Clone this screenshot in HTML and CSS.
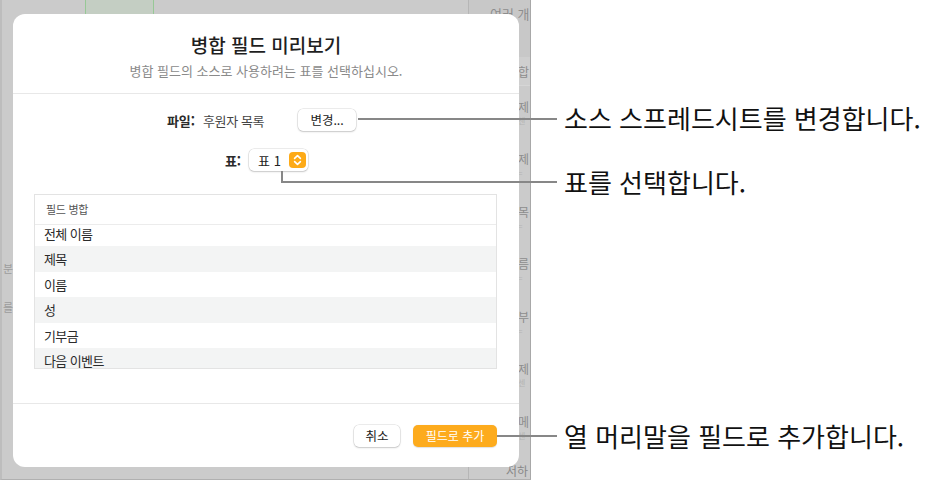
FILE: index.html
```html
<!DOCTYPE html>
<html lang="ko">
<head>
<meta charset="utf-8">
<title>병합 필드 미리보기</title>
<link rel="stylesheet" href="styles.css">
</head>
<body>
<div class="stage">
  <div class="app">
    <div class="bg-cell"></div>
    <div class="bg-vline"></div>
    <div class="bg-left">
      <span class="bg-left-ch">분</span>
      <span class="bg-left-ch">를</span>
    </div>
    <div class="bg-strip">
      <div class="strip-head">여러 개</div>
      <div class="strip-sum">합</div>
      <div class="strip-row"><span class="s-main">제</span><span class="s-sub">센</span></div>
      <div class="strip-row"><span class="s-main">제</span><span class="s-sub">=</span></div>
      <div class="strip-row"><span class="s-main">목</span><span class="s-sub">=</span></div>
      <div class="strip-row"><span class="s-main">름</span><span class="s-sub">=</span></div>
      <div class="strip-row"><span class="s-main">부</span><span class="s-sub">=</span></div>
      <div class="strip-row"><span class="s-main">제</span><span class="s-sub">센</span></div>
      <div class="strip-row"><span class="s-main">메</span><span class="s-sub">센</span></div>
      <div class="strip-foot">저하</div>
    </div>

    <div class="dialog">
      <header class="dlg-head">
        <h1 class="dlg-title">병합 필드 미리보기</h1>
        <p class="dlg-sub">병합 필드의 소스로 사용하려는 표를 선택하십시오.</p>
      </header>
      <section class="dlg-body">
        <div class="form-row file-row">
          <span class="lbl">파일:</span>
          <span class="val">후원자 목록</span>
          <button class="btn btn-change">변경...</button>
        </div>
        <div class="form-row table-row">
          <span class="lbl">표:</span>
          <div class="popup">
            <span class="popup-text">표 1</span>
            <span class="stepper">
              <svg width="17" height="16" viewBox="0 0 17 16">
                <rect x="0" y="0" width="17" height="16" rx="4" fill="#fdaa17"/>
                <path d="M5.6 6.4 L8.5 3.6 L11.4 6.4" fill="none" stroke="#fff" stroke-width="1.6" stroke-linecap="round" stroke-linejoin="round"/>
                <path d="M5.6 9.6 L8.5 12.4 L11.4 9.6" fill="none" stroke="#fff" stroke-width="1.6" stroke-linecap="round" stroke-linejoin="round"/>
              </svg>
            </span>
          </div>
        </div>
        <div class="fields">
          <div class="fields-head">필드 병합</div>
          <div class="fields-body">
            <div class="fields-inner">
              <div class="f-row">전체 이름</div>
              <div class="f-row alt">제목</div>
              <div class="f-row">이름</div>
              <div class="f-row alt">성</div>
              <div class="f-row">기부금</div>
              <div class="f-row alt">다음 이벤트</div>
            </div>
          </div>
        </div>
      </section>
      <footer class="dlg-foot">
        <button class="btn btn-cancel">취소</button>
        <button class="btn btn-primary">필드로 추가</button>
      </footer>
    </div>
  </div>

  <div class="callout-line c1"></div>
  <div class="callout-line c2v"></div>
  <div class="callout-line c2h"></div>
  <div class="callout-line c3"></div>

  <div class="callout-text t1">소스 스프레드시트를 변경합니다.</div>
  <div class="callout-text t2">표를 선택합니다.</div>
  <div class="callout-text t3">열 머리말을 필드로 추가합니다.</div>
</div>
</body>
</html>
```
FILE: styles.css
```css
* { box-sizing: border-box; }
html, body { margin: 0; padding: 0; background: #ffffff; }
body {
  font-family: "Noto Sans CJK KR", "Noto Sans", sans-serif;
  color: #222;
}
.stage {
  position: relative;
  width: 928px;
  height: 481px;
  overflow: hidden;
  background: #fff;
}

/* dimmed app background */
.app {
  position: relative;
  width: 531px;
  height: 480px;
  background: #cbcbcb;
  border-left: 2px solid #bdbdbd;
  border-right: 1px solid #a8a8a8;
  border-bottom: 1px solid #b0b0b0;
  overflow: hidden;
}
.bg-cell {
  position: absolute;
  left: 83px;
  top: 0;
  width: 69px;
  height: 16px;
  background: #c4cec3;
  border-left: 1px solid #97c896;
  border-right: 1px solid #97c896;
}
.bg-vline {
  position: absolute;
  left: 466px;
  top: 0;
  width: 1px;
  height: 100%;
  background: #b6b6b6;
}
.bg-left {
  position: absolute;
  left: 1px;
  top: 258px;
  display: flex;
  flex-direction: column;
  gap: 19px;
  font-size: 11px;
  line-height: 20px;
  color: #9c9c9c;
}
.bg-strip {
  position: absolute;
  left: 467px;
  top: 0;
  width: 62px;
  height: 479px;
  display: flex;
  flex-direction: column;
  color: #8d8d8d;
  font-size: 12px;
}
.strip-head {
  height: 57px;
  padding: 4px 0 0 21px;
  line-height: 20px;
  background: #c8c8c8;
  font-size: 13px;
}
.strip-sum {
  height: 29px;
  padding: 7px 0 0 49px;
  line-height: 16px;
  background: #cfcfcf;
  border-bottom: 1px solid #d6d6d6;
}
.strip-row {
  height: 52.7px;
  padding: 13px 0 0 49px;
  display: flex;
  flex-direction: column;
  line-height: 16px;
}
.s-sub {
  font-size: 8px;
  line-height: 12px;
  color: #b4b4b4;
}
.strip-foot {
  padding: 10px 0 0 37px;
  line-height: 16px;
  font-size: 12px;
  color: #888;
}

/* dialog (overlay) */
.dialog {
  position: absolute;
  left: 11px;
  top: 14px;
  width: 506px;
  height: 453px;
  background: #fff;
  border-radius: 12px;
  display: flex;
  flex-direction: column;
}
.dlg-head {
  height: 80px;
  padding-top: 19px;
  border-bottom: 1px solid #e8e8e8;
  text-align: center;
}
.dlg-title {
  margin: 0;
  font-size: 19px;
  line-height: 24px;
  font-weight: 500;
  color: #1f1f1f;
}
.dlg-sub {
  margin: 6px 0 0;
  font-size: 13px;
  line-height: 16px;
  color: #8a8a8a;
}
.dlg-body {
  height: 310px;
  padding: 15px 22px 0 21px;
  border-bottom: 1px solid #e8e8e8;
  display: flex;
  flex-direction: column;
}
.form-row {
  height: 22px;
  display: flex;
  align-items: center;
  justify-content: center;
  font-size: 13px;
  color: #333;
}
.lbl { font-weight: 700; color: #2a2a2a; }
.file-row { padding-right: 8px; }
.file-row .val { margin-left: 8px; margin-right: 34px; letter-spacing: -0.4px; color: #444; }
.table-row { margin-top: 18px; padding-left: 2px; }
.table-row .lbl { margin-right: 8px; }

.btn {
  height: 22px;
  border: none;
  border-radius: 5px;
  background: #fff;
  font-family: inherit;
  font-size: 12.5px;
  line-height: 22px;
  color: #222;
  padding: 0 10px;
  box-shadow: 0 0 0 0.5px rgba(0,0,0,0.14), 0 1px 2px rgba(0,0,0,0.16);
}
.btn-change { width: 58px; padding: 0; }

.popup {
  width: 59px;
  height: 22px;
  border-radius: 5px;
  background: #fff;
  box-shadow: 0 0 0 0.5px rgba(0,0,0,0.14), 0 1px 2px rgba(0,0,0,0.16);
  display: flex;
  align-items: center;
  justify-content: space-between;
  padding: 0 2px 0 9px;
}
.popup-text { font-size: 13px; color: #222; }
.stepper { display: flex; }

.fields {
  margin-top: 23px;
  height: 175px;
  border: 1px solid #e3e3e3;
  display: flex;
  flex-direction: column;
}
.fields-head {
  height: 30px;
  flex: none;
  border-bottom: 1px solid #ececec;
  padding-left: 11px;
  font-size: 11px;
  line-height: 29px;
  color: #555;
  letter-spacing: -0.3px;
}
.fields-body {
  flex: 1;
  overflow: hidden;
}
.fields-inner { margin-top: -4.5px; }
.f-row {
  height: 25.5px;
  padding-left: 9px;
  font-size: 13px;
  line-height: 25.5px;
  color: #2b2b2b;
  letter-spacing: -0.6px;
}
.f-row.alt { background: #f3f4f4; }

.dlg-foot {
  flex: 1;
  display: flex;
  justify-content: flex-end;
  align-items: flex-start;
  gap: 13px;
  padding: 21px 22px 0 0;
}
.btn-cancel { width: 46px; padding: 0; }
.btn-primary {
  width: 84px;
  padding: 0;
  background: #fdab1d;
  color: #fff;
  font-size: 12px;
  box-shadow: 0 0.5px 1px rgba(0,0,0,0.12);
}

/* callouts (annotations over the picture) */
.callout-line { position: absolute; background: #878787; }
.c1 { left: 358px; top: 118px; width: 199px; height: 2px; }
.c2v { left: 281px; top: 171px; width: 2px; height: 12px; }
.c2h { left: 281px; top: 181px; width: 276px; height: 2px; }
.c3 { left: 497px; top: 435px; width: 60px; height: 2px; }

.callout-text {
  position: absolute;
  left: 564px;
  font-size: 26px;
  line-height: 30px;
  color: #111;
  white-space: nowrap;
}
.t1 { top: 103px; }
.t2 { top: 167px; }
.t3 { top: 421px; }
```
